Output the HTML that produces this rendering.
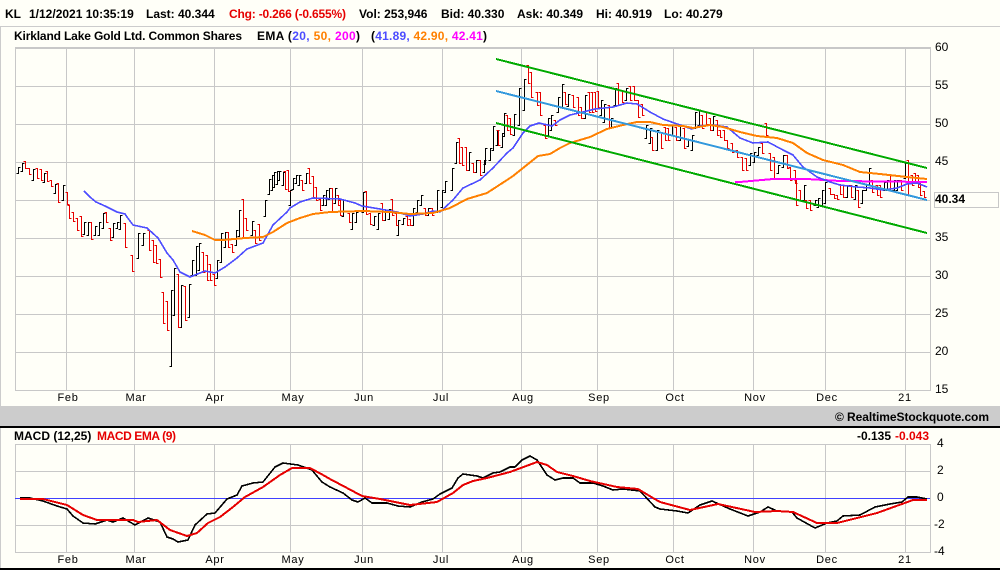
<!DOCTYPE html>
<html><head><meta charset="utf-8"><title>KL chart</title>
<style>
html,body{margin:0;padding:0;background:#fffff8;width:1000px;height:570px;overflow:hidden}
svg{display:block}
text{font-family:"Liberation Sans",Arial,sans-serif;font-size:12px;fill:#000}
.b{font-weight:bold}
.r{fill:#e60000}
.m{font-size:11px;letter-spacing:.7px;text-anchor:middle}
.a{font-size:12px}
</style></head><body>
<svg width="1000" height="570" viewBox="0 0 1000 570" xmlns="http://www.w3.org/2000/svg">
<rect width="1000" height="570" fill="#fffff8"/>
<rect x="0" y="26" width="1000" height="1" fill="#ccc"/>
<rect x="0" y="26" width="1" height="380" fill="#ccc"/>
<rect x="0" y="428" width="1" height="140" fill="#ccc"/>
<rect x="0" y="406" width="1000" height="20" fill="#ccc"/>
<rect x="0" y="426" width="1000" height="2" fill="#000"/>
<rect x="0" y="568" width="1000" height="2" fill="#000"/>
<g transform="translate(.5,.5)" fill="none" stroke="#c8c8c8" shape-rendering="crispEdges">
<path d="M15 47H930V390H15ZM15 48H930M15 86H930M15 124H930M15 162H930M15 200H930M15 238H930M15 276H930M15 314H930M15 352H930M66 47V390M134 47V390M214 47V390M290 47V390M362 47V390M442 47V390M521 47V390M597 47V390M673 47V390M753 47V390M825 47V390M905 47V390"/>
<path d="M15 444H930V552H15ZM15 471H930M15 525H930M66 444V552M134 444V552M214 444V552M290 444V552M362 444V552M442 444V552M521 444V552M597 444V552M673 444V552M753 444V552M825 444V552M905 444V552"/>
<rect x="934" y="192" width="64" height="15"/>
</g>

<g transform="translate(.5,.5)" fill="none" stroke-width="1" shape-rendering="crispEdges">
<path stroke="#000" d="M20 167h-2V173h-2M24 163h-2V171h-2M35 169h-2V180h-2M46 173h-2V182h-2M57 184h-2V193h-2M65 185h-2V200h-2M86 222h-2V234h-2M90 222h-2V235h-2M97 226h-2V235h-2M101 222h-2V235h-2M105 213h-2V228h-2M115 223h-2V237h-2M119 222h-2V228h-2M122 215h-2V229h-2M140 233h-2V258h-2M145 233h-2V245h-2M173 290h-2V366h-2M176 268h-2V315h-2M183 285h-2V327h-2M191 284h-2V317h-2M194 260h-2V275h-2M198 246h-2V275h-2M201 243h-2V270h-2M219 260h-2V278h-2M223 233h-2V262h-2M227 232h-2V247h-2M238 230h-2V245h-2M241 210h-2V236h-2M254 221h-2V235h-2M267 200h-2V216h-2M271 179h-2V194h-2M274 175h-2V190h-2M276 172h-2V187h-2M279 171h-2V184h-2M281 171h-2V180h-2M285 172h-2V185h-2M292 190h-2V205h-2M295 178h-2V189h-2M298 175h-2V183h-2M301 175h-2V185h-2M308 173h-2V183h-2M325 195h-2V205h-2M328 190h-2V205h-2M331 188h-2V199h-2M337 188h-2V203h-2M345 200h-2V216h-2M354 213h-2V229h-2M358 212h-2V222h-2M365 192h-2V212h-2M376 216h-2V225h-2M380 213h-2V229h-2M387 210h-2V220h-2M391 209h-2V219h-2M400 220h-2V235h-2M405 218h-2V224h-2M415 208h-2V225h-2M419 200h-2V212h-2M423 195h-2V205h-2M430 208h-2V215h-2M439 190h-2V212h-2M444 190h-2V207h-2M447 181h-2V192h-2M454 168h-2V190h-2M458 142h-2V163h-2M471 152h-2V170h-2M478 160h-2V172h-2M486 160h-2V172h-2M487 148h-2V164h-2M492 148h-2V160h-2M495 126h-2V150h-2M499 130h-2V145h-2M504 133h-2V147h-2M506 113h-2V136h-2M516 114h-2V135h-2M521 88h-2V125h-2M526 79h-2V110h-2M550 118h-2V135h-2M553 115h-2V130h-2M560 97h-2V112h-2M564 84h-2V107h-2M570 94h-2V106h-2M587 95h-2V118h-2M603 100h-2V115h-2M606 104h-2V122h-2M613 118h-2V128h-2M617 88h-2V105h-2M628 88h-2V100h-2M648 125h-2V138h-2M652 128h-2V143h-2M659 130h-2V150h-2M674 125h-2V135h-2M682 125h-2V140h-2M690 140h-2V146h-2M694 135h-2V150h-2M697 112h-2V128h-2M701 110h-2V125h-2M715 116h-2V130h-2M752 153h-2V165h-2M756 152h-2V162h-2M760 147h-2V155h-2M780 165h-2V173h-2M785 155h-2V167h-2M806 185h-2V200h-2M817 200h-2V205h-2M820 198h-2V207h-2M824 190h-2V205h-2M827 182h-2V203h-2M849 185h-2V197h-2M857 185h-2V199h-2M864 190h-2V203h-2M868 185h-2V190h-2M871 168h-2V185h-2M886 182h-2V190h-2M889 180h-2V190h-2M896 180h-2V190h-2M899 180h-2V190h-2M907 163h-2V178h-2"/>
<path stroke="#e60000" d="M23 161h2V168h2M27 168h2V174h2M35 168h2V178h2M39 169h2V180h2M45 171h2V181h2M49 180h2V186h2M56 183h2V202h2M65 192h2V204h2M67 205h2V218h2M71 212h2V221h2M75 218h2V230h2M79 216h2V236h2M89 222h2V239h2M104 212h2V222h2M108 228h2V240h2M123 223h2V247h2M130 255h2V271h2M147 230h2V250h2M151 240h2V262h2M154 245h2V263h2M158 259h2V277h2M161 292h2V323h2M165 301h2V330h2M176 274h2V327h2M183 286h2V320h2M201 252h2V272h2M205 255h2V280h2M208 264h2V280h2M212 274h2V285h2M226 232h2V247h2M230 244h2V252h2M241 199h2V238h2M244 218h2V230h2M253 230h2V243h2M257 224h2V240h2M283 171h2V189h2M286 170h2V191h2M300 180h2V190h2M307 168h2V183h2M311 176h2V197h2M314 187h2V200h2M318 199h2V210h2M330 188h2V212h2M336 195h2V205h2M338 200h2V215h2M347 213h2V222h2M364 191h2V214h2M368 213h2V224h2M380 203h2V220h2M390 199h2V215h2M394 213h2V225h2M405 216h2V225h2M408 219h2V225h2M423 208h2V215h2M430 208h2V215h2M457 138h2V163h2M460 147h2V165h2M464 147h2V170h2M471 163h2V172h2M478 160h2V175h2M496 130h2V145h2M505 115h2V130h2M508 118h2V134h2M526 65h2V83h2M529 72h2V97h2M535 92h2V105h2M538 92h2V115h2M543 125h2V138h2M553 120h2V125h2M563 92h2V104h2M571 95h2V107h2M576 97h2V115h2M579 107h2V118h2M587 92h2V112h2M590 92h2V112h2M593 92h2V111h2M596 91h2V107h2M607 105h2V128h2M616 83h2V105h2M620 90h2V102h2M628 86h2V100h2M632 86h2V100h2M636 100h2V117h2M640 104h2V115h2M650 137h2V150h2M659 132h2V148h2M663 127h2V140h2M666 128h2V140h2M674 127h2V140h2M682 128h2V148h2M700 115h2V128h2M704 112h2V124h2M708 118h2V130h2M715 120h2V135h2M718 130h2V137h2M722 130h2V140h2M725 140h2V148h2M730 143h2V152h2M735 150h2V157h2M740 157h2V170h2M744 158h2V170h2M760 143h2V153h2M764 123h2V135h2M768 153h2V170h2M772 157h2V178h2M785 155h2V168h2M788 167h2V180h2M793 170h2V183h2M794 180h2V205h2M798 190h2V200h2M804 200h2V208h2M808 200h2V210h2M828 188h2V194h2M832 194h2V198h2M835 195h2V199h2M838 184h2V194h2M841 185h2V197h2M849 185h2V197h2M856 190h2V207h2M870 180h2V192h2M875 185h2V195h2M878 185h2V197h2M888 175h2V190h2M899 180h2V190h2M906 160h2V195h2M910 175h2V185h2M913 173h2V182h2M916 175h2V187h2M918 183h2V195h2M922 191h2V197h2"/>
</g>

<g fill="none" stroke-linejoin="round" shape-rendering="crispEdges">
<path stroke="#ff00ff" stroke-width="2" d="M735 182L740 182L773 179L807 179L840 181L927 182"/>
<path stroke="#4d4dff" stroke-width="1.6" d="M84 191L90 197L96 202L105 206L113 210L117 212L125 214L127 217L133 225L147 228L158 238L167 253L173 260L180 272L190 277L205 271L215 273L225 267L237 258L247 249L263 243L273 225L287 212L290 208L300 202L313 198L340 199L355 203L362 206L380 209L397 212L410 216L423 214L433 211L440 212L453 200L463 188L480 180L493 168L507 153L513 148L523 133L530 126L539 123L552 126L560 120L570 115L583 112L595 109L613 107L627 103L637 104L650 112L663 119L680 125L692 129L700 126L713 125L727 127L740 138L753 143L768 142L783 150L793 155L803 167L817 177L830 182L840 185L857 187L870 188L883 190L897 188L907 184L917 183L927 187"/>
<path stroke="#ff8000" stroke-width="2" d="M192 231L205 235L215 240L223 240L245 238L263 237L273 232L287 223L300 218L313 214L330 212L363 211L390 212L410 214L433 213L450 208L467 199L487 193L507 180L513 176L523 168L538 156L550 154L560 148L570 143L590 137L607 129L623 125L637 122L650 122L663 125L683 126L693 128L710 125L723 127L740 132L757 136L777 138L793 143L807 153L823 160L843 165L860 172L880 174L907 177L927 179"/>
<path stroke="#00aa00" stroke-width="2" d="M496 59L927 168M496 123L927 233"/>
<path stroke="#3399dd" stroke-width="2" d="M496 91L927 200"/>
<path stroke="#4040ff" stroke-width="1" d="M15 498.5H930"/>
<path stroke="#000" stroke-width="1.6" d="M20 498L30 498L43 501L57 506L67 509L73 516L83 523L95 524L107 520L113 522L123 518L135 525L148 518L160 522L167 537L173 539L178 542L188 540L195 525L207 514L215 513L227 499L237 495L242 486L253 483L263 482L275 467L283 463L298 465L312 470L322 482L330 487L343 493L352 500L358 502L365 498L372 503L387 503L398 506L410 507L422 502L433 499L440 494L452 488L458 478L463 474L477 476L483 478L493 473L500 472L510 467L515 467L522 460L530 456L537 460L547 475L555 480L563 478L573 478L580 483L593 483L603 486L613 490L623 489L640 491L655 507L660 509L677 511L688 513L700 505L712 501L730 509L748 516L760 512L768 507L777 511L792 512L797 518L815 528L827 523L837 521L843 516L860 515L875 507L890 504L902 502L908 497L917 497L927 499"/>
<path stroke="#e60000" stroke-width="2" d="M20 499L43 499L67 505L83 515L97 520L133 520L138 522L157 520L170 530L187 536L197 533L208 523L220 517L233 507L245 497L263 487L280 475L292 468L310 468L323 475L330 479L347 488L362 496L380 499L410 505L437 502L453 493L463 485L473 481L487 478L510 472L537 462L547 465L557 472L573 476L590 481L617 487L638 489L653 498L660 502L690 510L718 504L755 512L777 511L793 512L817 523L837 523L877 513L913 500L927 500"/>
</g>

<text class="b" x="5" y="18">KL</text>
<text class="b" x="29" y="18">1/12/2021 10:35:19</text>
<text class="b" x="146" y="18">Last: 40.344</text>
<text class="b r" x="229" y="18" textLength="117">Chg: -0.266 (-0.655%)</text>
<text class="b" x="359" y="18">Vol: 253,946</text>
<text class="b" x="441" y="18">Bid: 40.330</text>
<text class="b" x="517" y="18">Ask: 40.349</text>
<text class="b" x="596" y="18">Hi: 40.919</text>
<text class="b" x="664" y="18">Lo: 40.279</text>

<text class="b" x="14" y="40" textLength="228">Kirkland Lake Gold Ltd. Common Shares</text>
<text class="b" x="257" y="40" textLength="103">EMA (<tspan fill="#4d4dff">20, </tspan><tspan fill="#ff8000">50, </tspan><tspan fill="#ff00ff">200</tspan>)</text>
<text class="b" x="371" y="40" textLength="116">(<tspan fill="#4d4dff">41.89, </tspan><tspan fill="#ff8000">42.90, </tspan><tspan fill="#ff00ff">42.41</tspan>)</text>

<g class="a">
<text x="935" y="51">60</text><text x="935" y="89">55</text><text x="935" y="127">50</text><text x="935" y="165">45</text><text x="935" y="241">35</text><text x="935" y="279">30</text><text x="935" y="317">25</text><text x="935" y="355">20</text><text x="935" y="393">15</text>
<text x="937" y="447">4</text><text x="937" y="474">2</text><text x="937" y="501">0</text><text x="934" y="528">-2</text><text x="934" y="555">-4</text>
</g>
<text class="b" x="935" y="203">40.34</text>

<text class="m" x="68" y="401">Feb</text><text class="m" x="136" y="401">Mar</text><text class="m" x="215" y="401">Apr</text><text class="m" x="293" y="401">May</text><text class="m" x="364" y="401">Jun</text><text class="m" x="441" y="401">Jul</text><text class="m" x="523" y="401">Aug</text><text class="m" x="599" y="401">Sep</text><text class="m" x="675" y="401">Oct</text><text class="m" x="755" y="401">Nov</text><text class="m" x="827" y="401">Dec</text><text class="m" x="905" y="401">21</text>
<text class="m" x="68" y="563">Feb</text><text class="m" x="136" y="563">Mar</text><text class="m" x="215" y="563">Apr</text><text class="m" x="293" y="563">May</text><text class="m" x="364" y="563">Jun</text><text class="m" x="441" y="563">Jul</text><text class="m" x="523" y="563">Aug</text><text class="m" x="599" y="563">Sep</text><text class="m" x="675" y="563">Oct</text><text class="m" x="755" y="563">Nov</text><text class="m" x="827" y="563">Dec</text><text class="m" x="905" y="563">21</text>

<text class="b" x="835" y="421" textLength="154">© RealtimeStockquote.com</text>
<text class="b" x="14" y="440">MACD (12,25)</text>
<text class="b r" x="97" y="440" textLength="79">MACD EMA (9)</text>
<text class="b" x="857" y="440">-0.135</text>
<text class="b r" x="895" y="440">-0.043</text>
</svg>
</body></html>
